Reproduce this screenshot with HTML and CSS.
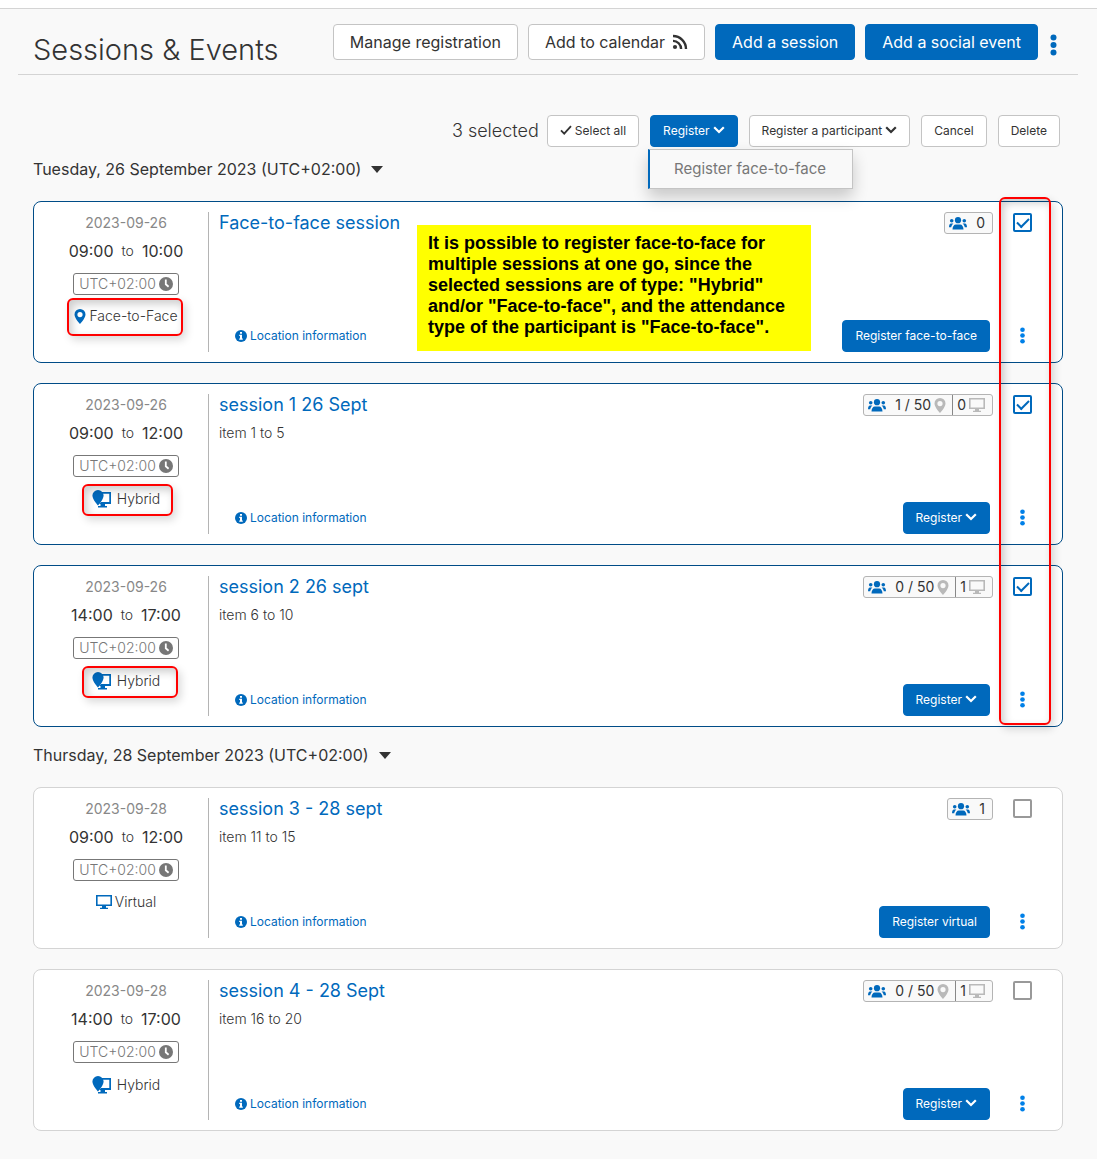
FILE: index.html
```html
<!DOCTYPE html>
<html lang="en">

<head>
  <meta charset="UTF-8">
  <meta name="viewport" content="width=device-width, initial-scale=1.0">
  <title>Sessions & Events</title>
  <link rel="stylesheet" href="styles.css">
</head>

<body>
  <!-- icons -->
  <svg class="sprite" aria-hidden="true">
    <symbol id="i-rss" viewBox="0 0 16 16">
      <circle cx="3" cy="13" r="2.1" />
      <path d="M1 6.9a8.1 8.1 0 0 1 8.1 8.1M1 2a13 13 0 0 1 13 13" fill="none" stroke="currentColor" stroke-width="2.4" />
    </symbol>
    <symbol id="i-check" viewBox="0 0 12 10">
      <path d="M1 5.4l3.2 3.2L11 1.2" fill="none" stroke="currentColor" stroke-width="1.8" />
    </symbol>
    <symbol id="i-arrow" viewBox="0 0 12 8">
      <path d="M1.2 1.2L6 6l4.8-4.8" fill="none" stroke="currentColor" stroke-width="2.2" />
    </symbol>
    <symbol id="i-caret" viewBox="0 0 12 7">
      <path d="M0 0h12L6 7z" />
    </symbol>
    <symbol id="i-more" viewBox="0 0 6 22">
      <circle cx="3" cy="3.5" r="3" />
      <circle cx="3" cy="11" r="3" />
      <circle cx="3" cy="18.5" r="3" />
    </symbol>
    <symbol id="i-clock" viewBox="0 0 14 14">
      <circle cx="7" cy="7" r="7" />
      <path d="M6.8 2.6v4.7l2.8 2.4" fill="none" stroke="#fff" stroke-width="1.8" />
    </symbol>
    <symbol id="i-pin" viewBox="0 0 12 15">
      <path fill-rule="evenodd" d="M6 0a5.5 5.5 0 0 0-5.5 5.5C.5 9.3 6 15 6 15s5.500-5.700 5.500-9.500A5.500 5.500 0 0 0 6 0zm0 8.200a2.600 2.600 0 1 1 0-5.200 2.600 2.600 0 0 1 0 5.200z" />
    </symbol>
    <symbol id="i-screen" viewBox="0 0 16 14">
      <path fill-rule="evenodd" d="M0 0h16v11h-6v1.700h2V14H4v-1.300h2V11H0zm1.600 1.600v7.800h12.800V1.600z" />
    </symbol>
    <symbol id="i-hybrid" viewBox="0 0 20 18">
      <path fill-rule="evenodd" d="M9 2h10v12h-6v2h2v1.500H6V16h2.500v-2H7l2-2h8.300V3.700H9z" />
      <path d="M6 0a5.600 5.600 0 0 0-5.600 5.600C.4 9.600 6 15.500 6 15.500s5.600-5.900 5.600-9.900A5.600 5.600 0 0 0 6 0z" />
    </symbol>
    <symbol id="i-info" viewBox="0 0 12 12">
      <circle cx="6" cy="6" r="6" />
      <path d="M5 2h2v1.800H5zM4.200 4.800H7v3.600h.8v1.300H4.200V8.400H5V6h-.8z" fill="#fff" />
    </symbol>
    <symbol id="i-users" viewBox="0 0 18 13">
      <circle cx="9" cy="3.200" r="3.100" />
      <circle cx="2.700" cy="3.700" r="1.800" />
      <circle cx="15.300" cy="3.700" r="1.800" />
      <path d="M3.500 12.500c0-3 1.500-5 3.300-5h4.400c1.800 0 3.300 2 3.300 5zM0 10.300c0-2.600.8-3.900 2-3.900h2.400c-1.200.9-1.900 2.200-2.200 3.900zM18 10.300c0-2.600-.8-3.900-2-3.900h-2.400c1.200.9 1.900 2.200 2.200 3.900z" />
    </symbol>
  </svg>

  <div class="topbar"></div>

  <main>
    <header class="page-header">
      <h1>Sessions &amp; Events</h1>
      <div class="actions">
        <button class="btn btn-large">Manage registration</button>
        <button class="btn btn-large">Add to calendar <svg class="icon-rss"><use href="#i-rss" /></svg></button>
        <button class="btn btn-large primary">Add a session</button>
        <button class="btn btn-large primary">Add a social event</button>
        <button class="more more-large" aria-label="More actions"><svg><use href="#i-more" /></svg></button>
      </div>
    </header>

    <div class="toolbar">
      <span class="selected-count">3 selected</span>
      <button class="btn"><svg class="icon-check"><use href="#i-check" /></svg>Select all</button>
      <div class="dropdown">
        <button class="btn primary">Register <svg class="icon-arrow"><use href="#i-arrow" /></svg></button>
        <div class="dropdown-menu">
          <a href="#">Register face-to-face</a>
        </div>
      </div>
      <button class="btn">Register a participant <svg class="icon-arrow"><use href="#i-arrow" /></svg></button>
      <button class="btn">Cancel</button>
      <button class="btn">Delete</button>
    </div>

    <section class="day">
      <h2>Tuesday, 26 September 2023 (UTC+02:00) <button class="toggle" aria-label="Collapse day"><svg class="icon-caret"><use href="#i-caret" /></svg></button></h2>

      <div class="sessions">
        <article class="session selected">
          <div class="when">
            <div class="date">2023-09-26</div>
            <div class="time">09:00 <small>to</small> 10:00</div>
            <div class="tz">UTC+02:00 <svg class="icon-clock"><use href="#i-clock" /></svg></div>
            <div class="type marked"><svg class="icon-pin"><use href="#i-pin" /></svg>Face-to-Face</div>
          </div>
          <div class="body">
            <div class="row">
              <h3><a href="#">Face-to-face session</a></h3>
              <div class="places"><span><svg class="icon-users"><use href="#i-users" /></svg>0</span></div>
            </div>
            <div class="row row-bottom">
              <a class="location" href="#"><svg class="icon-info"><use href="#i-info" /></svg>Location information</a>
              <button class="btn primary">Register face-to-face</button>
            </div>
          </div>
          <div class="side">
            <input type="checkbox" aria-label="Select Face-to-face session" checked>
            <button class="more" aria-label="More actions"><svg><use href="#i-more" /></svg></button>
          </div>
          <p class="note">It is possible to register face-to-face for<br>multiple sessions at one go, since the<br>selected sessions are of type: "Hybrid"<br>and/or "Face-to-face", and the attendance<br>type of the participant is "Face-to-face".</p>
        </article>

        <article class="session selected">
          <div class="when">
            <div class="date">2023-09-26</div>
            <div class="time">09:00 <small>to</small> 12:00</div>
            <div class="tz">UTC+02:00 <svg class="icon-clock"><use href="#i-clock" /></svg></div>
            <div class="type hybrid marked"><svg class="icon-hybrid"><use href="#i-hybrid" /></svg>Hybrid</div>
          </div>
          <div class="body">
            <div class="row">
              <h3><a href="#">session 1 26 Sept</a></h3>
              <div class="places">
                <span><svg class="icon-users"><use href="#i-users" /></svg>1 / 50<svg class="icon-pin"><use href="#i-pin" /></svg></span>
                <span>0<svg class="icon-screen"><use href="#i-screen" /></svg></span>
              </div>
            </div>
            <p>item 1 to 5</p>
            <div class="row row-bottom">
              <a class="location" href="#"><svg class="icon-info"><use href="#i-info" /></svg>Location information</a>
              <button class="btn primary">Register <svg class="icon-arrow"><use href="#i-arrow" /></svg></button>
            </div>
          </div>
          <div class="side">
            <input type="checkbox" aria-label="Select session 1 26 Sept" checked>
            <button class="more" aria-label="More actions"><svg><use href="#i-more" /></svg></button>
          </div>
        </article>

        <article class="session selected">
          <div class="when">
            <div class="date">2023-09-26</div>
            <div class="time">14:00 <small>to</small> 17:00</div>
            <div class="tz">UTC+02:00 <svg class="icon-clock"><use href="#i-clock" /></svg></div>
            <div class="type hybrid marked wide"><svg class="icon-hybrid"><use href="#i-hybrid" /></svg>Hybrid</div>
          </div>
          <div class="body">
            <div class="row">
              <h3><a href="#">session 2 26 sept</a></h3>
              <div class="places">
                <span><svg class="icon-users"><use href="#i-users" /></svg>0 / 50<svg class="icon-pin"><use href="#i-pin" /></svg></span>
                <span>1<svg class="icon-screen"><use href="#i-screen" /></svg></span>
              </div>
            </div>
            <p>item 6 to 10</p>
            <div class="row row-bottom">
              <a class="location" href="#"><svg class="icon-info"><use href="#i-info" /></svg>Location information</a>
              <button class="btn primary">Register <svg class="icon-arrow"><use href="#i-arrow" /></svg></button>
            </div>
          </div>
          <div class="side">
            <input type="checkbox" aria-label="Select session 2 26 sept" checked>
            <button class="more" aria-label="More actions"><svg><use href="#i-more" /></svg></button>
          </div>
        </article>

        <div class="column-mark"></div>
      </div>
    </section>

    <section class="day">
      <h2>Thursday, 28 September 2023 (UTC+02:00) <button class="toggle" aria-label="Collapse day"><svg class="icon-caret"><use href="#i-caret" /></svg></button></h2>

      <div class="sessions">
        <article class="session">
          <div class="when">
            <div class="date">2023-09-28</div>
            <div class="time">09:00 <small>to</small> 12:00</div>
            <div class="tz">UTC+02:00 <svg class="icon-clock"><use href="#i-clock" /></svg></div>
            <div class="type"><svg class="icon-screen"><use href="#i-screen" /></svg>Virtual</div>
          </div>
          <div class="body">
            <div class="row">
              <h3><a href="#">session 3 - 28 sept</a></h3>
              <div class="places"><span><svg class="icon-users"><use href="#i-users" /></svg>1</span></div>
            </div>
            <p>item 11 to 15</p>
            <div class="row row-bottom">
              <a class="location" href="#"><svg class="icon-info"><use href="#i-info" /></svg>Location information</a>
              <button class="btn primary">Register virtual</button>
            </div>
          </div>
          <div class="side">
            <input type="checkbox" aria-label="Select session 3 - 28 sept">
            <button class="more" aria-label="More actions"><svg><use href="#i-more" /></svg></button>
          </div>
        </article>

        <article class="session">
          <div class="when">
            <div class="date">2023-09-28</div>
            <div class="time">14:00 <small>to</small> 17:00</div>
            <div class="tz">UTC+02:00 <svg class="icon-clock"><use href="#i-clock" /></svg></div>
            <div class="type hybrid"><svg class="icon-hybrid"><use href="#i-hybrid" /></svg>Hybrid</div>
          </div>
          <div class="body">
            <div class="row">
              <h3><a href="#">session 4 - 28 Sept</a></h3>
              <div class="places">
                <span><svg class="icon-users"><use href="#i-users" /></svg>0 / 50<svg class="icon-pin"><use href="#i-pin" /></svg></span>
                <span>1<svg class="icon-screen"><use href="#i-screen" /></svg></span>
              </div>
            </div>
            <p>item 16 to 20</p>
            <div class="row row-bottom">
              <a class="location" href="#"><svg class="icon-info"><use href="#i-info" /></svg>Location information</a>
              <button class="btn primary">Register <svg class="icon-arrow"><use href="#i-arrow" /></svg></button>
            </div>
          </div>
          <div class="side">
            <input type="checkbox" aria-label="Select session 4 - 28 Sept">
            <button class="more" aria-label="More actions"><svg><use href="#i-more" /></svg></button>
          </div>
        </article>
      </div>
    </section>
  </main>
</body>

</html>
```

FILE: styles.css
```css
* {
  margin: 0;
  padding: 0;
  box-sizing: border-box;
}

body {
  background-color: #f9f9f9;
  color: #333;
  font-family: Inter, "Liberation Sans", sans-serif;
  font-size: 14px;
  line-height: 20px;
}

a {
  color: #0069bc;
  text-decoration: none;
}

svg {
  display: block;
  flex: none;
  fill: currentColor;
}

.sprite {
  position: absolute;
  width: 0;
  height: 0;
}

.icon-rss {
  width: 16px;
  height: 16px;
  margin-left: 4px;
}

.icon-check {
  width: 12px;
  height: 10px;
}

.icon-arrow {
  width: 12px;
  height: 8px;
}

.icon-caret {
  width: 12px;
  height: 7px;
}

.icon-clock {
  width: 14px;
  height: 14px;
}

.icon-pin {
  width: 12px;
  height: 15px;
}

.icon-screen {
  width: 16px;
  height: 14px;
}

.icon-hybrid {
  width: 20px;
  height: 18px;
}

.icon-info {
  width: 12px;
  height: 12px;
}

.icon-users {
  width: 18px;
  height: 13px;
}

.topbar {
  height: 9px;
  background-color: #fff;
  border-bottom: 1px solid #d4d4d4;
}

main {
  padding: 0 34px 28px 33px;
}

/* header */
.page-header {
  display: flex;
  align-items: center;
  justify-content: space-between;
  height: 66px;
  margin: 0 -15px;
  padding: 0 20px 0 15px;
  border-bottom: 1px solid #d4d4d4;
}

h1 {
  font-size: 29px;
  font-weight: 300;
  line-height: 40px;
  padding-top: 16px;
}

.actions {
  display: flex;
  align-items: center;
  gap: 10px;
}

.btn {
  display: flex;
  align-items: center;
  gap: 3px;
  height: 32px;
  padding: 0 12px 2px;
  background-color: #fff;
  border: 1px solid #c4c4c4;
  border-radius: 4px;
  color: #333;
  font-family: inherit;
  font-size: 12px;
  white-space: nowrap;
  cursor: pointer;
}

.btn-large {
  height: 36px;
  padding: 0 16px;
  font-size: 16px;
}

.btn.primary {
  background-color: #0069bc;
  border-color: #0069bc;
  color: #fff;
}

.more {
  display: flex;
  align-items: center;
  justify-content: center;
  width: 20px;
  height: 32px;
  padding-bottom: 2px;
  background: none;
  border: none;
  color: #0080e8;
  cursor: pointer;
}

.more svg {
  width: 5px;
  height: 17px;
}

.more-large {
  width: 10px;
  padding: 6px 0 0;
  color: #0069bc;
}

.more-large svg {
  width: 7px;
  height: 22px;
}

/* bulk actions */
.toolbar {
  display: flex;
  align-items: center;
  justify-content: flex-end;
  gap: 11px;
  margin: 40px 3px 12px 0;
}

.selected-count {
  margin-right: -3px;
  font-size: 18px;
  font-weight: 300;
}

.dropdown {
  position: relative;
}

.dropdown-menu {
  position: absolute;
  top: 34px;
  left: -2px;
  z-index: 2;
  background-color: #f9f9f9;
  border: 1px solid #c4c4c4;
  border-left: 2px solid #0069bc;
  box-shadow: 0 8px 16px rgba(0, 0, 0, .2);
}

.dropdown-menu a {
  display: block;
  padding: 9px 26px 9px 24px;
  color: #777;
  font-size: 15px;
  white-space: nowrap;
}

/* days */
.day {
  margin-bottom: 18px;
}

h2 {
  display: flex;
  align-items: center;
  gap: 10px;
  margin-bottom: 22px;
  font-size: 16px;
  font-weight: 400;
}

.toggle {
  background: none;
  border: none;
  color: #333;
}

.sessions {
  display: flex;
  flex-direction: column;
  gap: 20px;
  position: relative;
}

.session {
  display: flex;
  position: relative;
  min-height: 162px;
  padding: 10px;
  background-color: #fff;
  border: 1px solid #d4d4d4;
  border-radius: 8px;
}

.session.selected {
  border-color: #004c87;
}

.when {
  display: flex;
  flex-direction: column;
  align-items: center;
  width: 165px;
  padding-top: 1px;
  border-right: 1px solid #b4b4b4;
}

.date {
  color: #888;
}

.time {
  display: flex;
  gap: 8px;
  margin: 8px 0 12px;
  font-size: 16px;
}

.time small {
  font-size: 14px;
  font-weight: 300;
}

.tz {
  display: flex;
  align-items: center;
  gap: 3px;
  padding: 0 5px;
  border: 1px solid #777;
  border-radius: 3px;
  color: #777;
  font-weight: 300;
}

.type {
  display: flex;
  align-items: center;
  gap: 3px;
  position: relative;
  margin-top: 11px;
  font-weight: 300;
}

.type svg {
  color: #0069bc;
}

.type.hybrid {
  gap: 5px;
  margin-top: 12px;
}

/* red frames drawn over the page */
.type.marked::after,
.column-mark {
  content: "";
  position: absolute;
  border: 2px solid #f00;
  border-radius: 6px;
  box-shadow: 3px 4px 8px rgba(0, 0, 0, .15), inset 3px 4px 8px rgba(0, 0, 0, .2);
  pointer-events: none;
}

.type.marked::after {
  inset: -8px -5px -10px -7px;
}

.type.hybrid.marked::after {
  inset: -5px -13px -7px -10px;
}

.type.hybrid.wide::after {
  right: -18px;
}

.column-mark {
  top: -4px;
  right: 12px;
  bottom: 2px;
  width: 52px;
}

.body {
  display: flex;
  flex: 1;
  flex-direction: column;
  padding-left: 10px;
}

.row {
  display: flex;
  align-items: center;
  justify-content: space-between;
}

h3 {
  font-size: 18px;
  font-weight: 400;
  line-height: 22px;
}

.body p {
  margin-top: 7px;
  font-weight: 300;
}

.row-bottom {
  margin-top: auto;
  padding: 0 3px 0 16px;
}

.location {
  display: flex;
  align-items: center;
  gap: 3px;
  font-size: 12px;
}

.places {
  display: flex;
  background-color: #f9f9f9;
  border: 1px solid #b4b4b4;
  border-radius: 3px;
}

.places span {
  display: flex;
  align-items: center;
  gap: 3px;
  padding: 0 7px 0 4px;
}

.places span:not(:last-child) {
  padding-right: 6px;
}

.places span + span {
  border-left: 1px solid #888;
}

.places svg {
  color: #b9b9b9;
}

.places .icon-users {
  margin-right: 6px;
  color: #0069bc;
}

.side {
  display: flex;
  flex-direction: column;
  align-items: center;
  justify-content: space-between;
  width: 59px;
}

input[type="checkbox"] {
  appearance: none;
  width: 19px;
  height: 19px;
  margin-top: 1px;
  border: 2px solid #999;
  border-radius: 2px;
  background-color: #fff;
}

input[type="checkbox"]:checked {
  display: grid;
  place-items: center;
  border-color: #0069bc;
}

input[type="checkbox"]:checked::before {
  content: "";
  width: 10px;
  height: 5px;
  border: solid #0069bc;
  border-width: 0 0 2px 2px;
  transform: translateY(-1px) rotate(-45deg);
}

.note {
  position: absolute;
  top: 23px;
  left: 383px;
  min-width: 394px;
  padding: 8px 10px 13px 11px;
  background-color: #ff0;
  color: #000;
  font-family: "Liberation Sans", Arial, sans-serif;
  font-size: 18px;
  font-weight: 700;
  line-height: 21px;
  white-space: nowrap;
}
```
